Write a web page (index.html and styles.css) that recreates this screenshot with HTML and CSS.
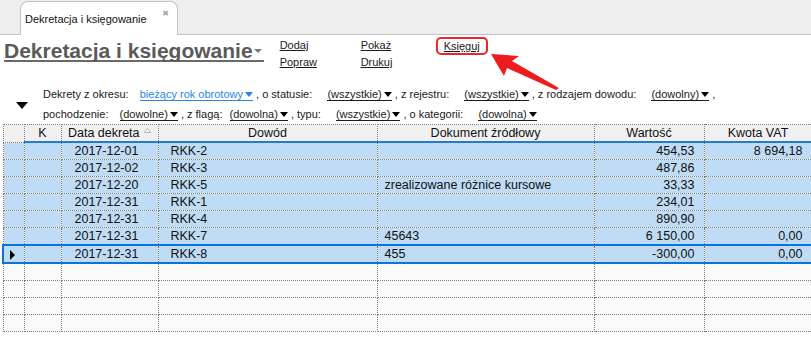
FILE: index.html
```html
<!DOCTYPE html>
<html lang="pl">
<head>
    <meta charset="UTF-8">
    <title>Dekretacja i księgowanie</title>
    <link rel="stylesheet" href="styles.css">
</head>
<body>
    <div class="tabbar">
        <div class="tab">
            <span class="tab-title">Dekretacja i księgowanie</span>
            <span class="tab-close">&#x2716;</span>
        </div>
    </div>

    <div class="page-head">
        <h1 class="page-title">Dekretacja i księgowanie<span class="caret-sm"></span></h1>
        <div class="actions">
            <div class="action-col col-1"><a href="#">Dodaj</a><a href="#">Popraw</a></div>
            <div class="action-col col-2"><a href="#">Pokaż</a><a href="#">Drukuj</a></div>
            <div class="action-col"><a href="#" class="marked">Księguj</a></div>
        </div>
    </div>

    <div class="filters">
        <div class="toggle"><span class="big-caret"></span></div>
        <div class="filter-lines">
            <div class="filter-line">
                <span>Dekrety z okresu:</span>
                <span class="pick pick-blue gap-m">bieżący rok obrotowy<span class="caret"></span></span>
                <span>, o statusie:</span>
                <span class="pick gap-l">(wszystkie)<span class="caret"></span></span>
                <span>, z rejestru:</span>
                <span class="pick gap-l">(wszystkie)<span class="caret"></span></span>
                <span>, z rodzajem dowodu:</span>
                <span class="pick gap-l">(dowolny)<span class="caret"></span></span>
                <span>,</span>
            </div>
            <div class="filter-line">
                <span>pochodzenie:</span>
                <span class="pick gap-m">(dowolne)<span class="caret"></span></span>
                <span>, z flagą:</span>
                <span class="pick gap-s">(dowolna)<span class="caret"></span></span>
                <span>, typu:</span>
                <span class="pick gap-l">(wszystkie)<span class="caret"></span></span>
                <span>, o kategorii:</span>
                <span class="pick gap-l">(dowolna)<span class="caret"></span></span>
            </div>
        </div>
    </div>

    <table class="grid">
        <colgroup>
            <col class="c-sel"><col class="c-k"><col class="c-date"><col class="c-doc">
            <col class="c-src"><col class="c-val"><col class="c-vat">
        </colgroup>
        <thead>
            <tr>
                <th class="sel"></th>
                <th>K</th>
                <th>Data dekreta <svg class="sort" width="7" height="5" viewBox="0 0 7 5"><path d="M0.5 4.5 L3.5 0.5 L6.5 4.5 Z" fill="#fff" stroke="#b5b5b5"/></svg></th>
                <th>Dowód</th>
                <th>Dokument źródłowy</th>
                <th>Wartość</th>
                <th>Kwota VAT</th>
            </tr>
        </thead>
        <tbody id="rows"></tbody>
    </table>

    <svg class="callout" width="811" height="340" viewBox="0 0 811 340">
        <polygon points="491,54 519,56 512,61 559,88 556,90 507,68 504,76" fill="#ee1c1c"/>
    </svg>

    <script>
        const rows = [
            { date: '2017-12-01', doc: 'RKK-2', src: '', val: '454,53', vat: '8 694,18' },
            { date: '2017-12-02', doc: 'RKK-3', src: '', val: '487,86', vat: '' },
            { date: '2017-12-20', doc: 'RKK-5', src: 'zrealizowane różnice kursowe', val: '33,33', vat: '' },
            { date: '2017-12-31', doc: 'RKK-1', src: '', val: '234,01', vat: '' },
            { date: '2017-12-31', doc: 'RKK-4', src: '', val: '890,90', vat: '' },
            { date: '2017-12-31', doc: 'RKK-7', src: '45643', val: '6 150,00', vat: '0,00' },
            { date: '2017-12-31', doc: 'RKK-8', src: '455', val: '-300,00', vat: '0,00', current: true }
        ];
        const body = document.getElementById('rows');

        rows.forEach(function (r) {
            const tr = document.createElement('tr');
            tr.className = r.current ? 'row current' : 'row';
            tr.innerHTML =
                '<td class="sel">' + (r.current ? '<span class="pointer"></span>' : '') + '</td>' +
                '<td></td>' +
                '<td class="date">' + r.date + '</td>' +
                '<td class="doc">' + r.doc + '</td>' +
                '<td class="src">' + r.src + '</td>' +
                '<td class="num">' + r.val + '</td>' +
                '<td class="num">' + r.vat + '</td>';
            body.appendChild(tr);
        });

        // empty lines below the data
        for (let i = 0; i < 4; i++) {
            const tr = document.createElement('tr');
            tr.className = 'row empty';
            tr.innerHTML = '<td class="sel"></td><td></td><td></td><td></td><td></td><td></td><td></td>';
            body.appendChild(tr);
        }
    </script>
</body>
</html>
```

FILE: styles.css
```css
body {
    margin: 0;
    width: 811px;
    height: 340px;
    overflow: hidden;
    position: relative;
    background: #fff;
    color: #111;
    font-family: 'Liberation Sans', Arial, sans-serif;
}

/* tab strip */
.tabbar {
    height: 34px;
    background: #eeeeee;
    border-bottom: 1px solid #c3c3c3;
    display: flex;
    align-items: flex-end;
    padding-left: 20px;
}
.tab {
    width: 158px;
    height: 34px;
    box-sizing: border-box;
    margin-bottom: -1px;
    background: #fff;
    border: 1px solid #c3c3c3;
    border-bottom: none;
    border-radius: 8px 8px 0 0;
    display: flex;
    align-items: flex-start;
    padding: 0 8px 0 4px;
}
.tab-title {
    font-size: 11px;
    line-height: 14px;
    padding-top: 10px;
    color: #111;
}
.tab-close {
    margin-left: auto;
    padding-top: 7px;
    font-size: 8px;
    line-height: 10px;
    color: #a8a8a8;
    font-family: 'DejaVu Sans', sans-serif;
}

/* title + actions */
.page-head {
    height: 50px;
    display: flex;
    align-items: flex-start;
    padding-left: 4px;
}
.page-title {
    margin: 6px 0 0 0;
    font-size: 21px;
    line-height: 19px;
    font-weight: bold;
    color: #5a5a5a;
    border-bottom: 2px solid #6a6a6a;
    display: flex;
    align-items: center;
}
.caret-sm {
    width: 0;
    height: 0;
    margin: 0 2px 0 1px;
    border-left: 4px solid transparent;
    border-right: 4px solid transparent;
    border-top: 4px solid #777;
}
.actions {
    display: flex;
    margin-left: 16px;
    margin-top: 2px;
}
.action-col {
    display: flex;
    flex-direction: column;
    align-items: flex-start;
}
.col-1 {
    width: 81px;
}
.col-2 {
    width: 75px;
}
.action-col a {
    font-size: 11px;
    line-height: 17px;
    color: #1a1a1a;
    text-decoration: underline;
}
.action-col a.marked {
    line-height: 14px;
    padding: 0 6px;
    border: 2px solid #e8262b;
    border-radius: 5px;
}

/* filter lines */
.filters {
    display: flex;
    height: 39px;
}
.toggle {
    width: 43px;
    display: flex;
    align-items: center;
    padding-left: 16px;
    box-sizing: border-box;
}
.big-caret {
    width: 0;
    height: 0;
    margin-top: 1px;
    border-left: 6px solid transparent;
    border-right: 6px solid transparent;
    border-top: 7px solid #000;
}
.filter-line {
    font-size: 11px;
    line-height: 19.5px;
    white-space: nowrap;
    color: #1a1a1a;
}
.pick {
    border-bottom: 1px solid #1a1a1a;
    line-height: 12px;
    display: inline-block;
}
.pick-blue {
    color: #2a86e0;
    border-bottom-color: #2a86e0;
}
.gap-s {
    margin-left: 4px;
}
.gap-m {
    margin-left: 8px;
}
.gap-l {
    margin-left: 12px;
}
.caret {
    display: inline-block;
    width: 0;
    height: 0;
    margin: 0 0 1px 2px;
    vertical-align: middle;
    border-left: 4px solid transparent;
    border-right: 4px solid transparent;
    border-top: 5px solid #000;
}
.pick-blue .caret {
    border-top-color: #2a86e0;
}

/* grid */
.grid {
    margin-left: 2px;
    width: 809px;
    table-layout: fixed;
    border-collapse: collapse;
    font-size: 12.5px;
}
.c-sel { width: 21px; }
.c-k { width: 37px; }
.c-date { width: 97px; }
.c-doc { width: 219px; }
.c-src { width: 217px; }
.c-val { width: 110px; }
.c-vat { width: 108px; }

.grid th,
.grid td {
    border: 1px dotted #7a7a7a;
    padding: 0;
    height: 16px;
    line-height: 16px;
    white-space: nowrap;
    overflow: hidden;
}
.grid th {
    background: #f0f0f0;
    font-weight: normal;
    color: #111;
    border-bottom: 2px solid #1e7cd6;
}
.grid th.sel {
    border-bottom: 1px dotted #7a7a7a;
}
.sort {
    margin-left: 1px;
    vertical-align: 4px;
}
.row td {
    background: #bfdcf4;
}
.row.empty td {
    background: #fafafa;
}
.row td.date {
    padding-left: 13px;
}
.row td.doc {
    padding-left: 12px;
}
.row td.src {
    padding-left: 7px;
}
.row td.num {
    text-align: right;
    padding-right: 9px;
}
.row.current td {
    border-top: 2px solid #0a75d6;
    border-bottom: 2px solid #0a75d6;
}
.row.current td.sel {
    border-left: 2px solid #0a75d6;
}
.pointer {
    display: inline-block;
    width: 0;
    height: 0;
    margin-left: 6px;
    border-top: 5px solid transparent;
    border-bottom: 5px solid transparent;
    border-left: 5px solid #000;
    vertical-align: middle;
}

/* red pointer drawn over the page */
.callout {
    position: absolute;
    left: 0;
    top: 0;
    pointer-events: none;
}
```
